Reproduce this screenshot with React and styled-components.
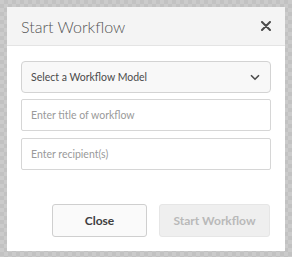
import React from "react";
import styled, { createGlobalStyle } from "styled-components";

const GlobalStyle = createGlobalStyle`
  html, body {
    margin: 0;
    padding: 0;
  }
  body {
    font-family: Lato, "Open Sans", sans-serif;
    background-color: #cbcbcb;
    background-image:
      linear-gradient(45deg, #c2c2c2 25%, transparent 25%, transparent 75%, #c2c2c2 75%),
      linear-gradient(45deg, #c2c2c2 25%, transparent 25%, transparent 75%, #c2c2c2 75%);
    background-size: 8px 8px;
    background-position: 0 0, 4px 4px;
    min-height: 257px;
  }
`;

const Page = styled.div`
  padding: 7px;
`;

const Dialog = styled.div`
  width: 278px;
  height: 244px;
  background: #fff;
  display: flex;
  flex-direction: column;
  box-sizing: border-box;
`;

const Header = styled.div`
  height: 39px;
  box-sizing: border-box;
  background: #f4f4f4;
  border-bottom: 1px solid #e4e4e4;
  display: flex;
  align-items: center;
  justify-content: space-between;
  padding: 0 12px 0 14px;
`;

const Title = styled.h1`
  margin: 0;
  font-size: 16px;
  font-weight: 300;
  color: #555;
`;

const CloseIcon = styled.button`
  border: 0;
  background: none;
  padding: 0;
  width: 14px;
  height: 14px;
  display: flex;
  align-items: center;
  justify-content: center;
  cursor: pointer;
`;

const Body = styled.div`
  flex: 1;
  padding: 15px 14px 14px;
  display: flex;
  flex-direction: column;
`;

const Fields = styled.div`
  display: flex;
  flex-direction: column;
  gap: 6px;
`;

const Select = styled.div`
  height: 32px;
  box-sizing: border-box;
  border: 1px solid #d3d3d3;
  border-radius: 4px;
  background: #f8f8f8;
  display: flex;
  align-items: center;
  justify-content: space-between;
  padding: 0 10px 0 9px;
  font-size: 10.5px;
  color: #4b4b4b;
`;

const Input = styled.input`
  height: 32px;
  box-sizing: border-box;
  border: 1px solid #d6d6d6;
  border-radius: 2px;
  background: #fff;
  padding: 0 9px;
  font-family: inherit;
  font-size: 10.5px;
  color: #4b4b4b;
  outline: none;
  &::placeholder {
    color: #9a9a9a;
  }
  & + & {
    margin-top: 1px;
  }
`;

const Footer = styled.div`
  margin-top: auto;
  display: flex;
  justify-content: flex-end;
  gap: 12px;
  padding-right: 1px;
`;

const Button = styled.button`
  height: 33px;
  width: ${(p) => p.$w}px;
  box-sizing: border-box;
  border-radius: 3px;
  border: 1px solid ${(p) => (p.disabled ? "#e6e6e6" : "#cfcfcf")};
  background: ${(p) => (p.disabled ? "#efefef" : "#fafafa")};
  color: ${(p) => (p.disabled ? "#b9b9b9" : "#3f3f3f")};
  font-family: inherit;
  font-weight: 700;
  font-size: 12px;
  padding: 0;
`;

export default function App() {
  return (
    <>
      <GlobalStyle />
      <Page>
        <Dialog>
          <Header>
            <Title>Start Workflow</Title>
            <CloseIcon aria-label="Close">
              <svg width="10" height="10" viewBox="0 0 10 10">
                <path d="M1 1L9 9M9 1L1 9" stroke="#4b4b4b" strokeWidth="2" strokeLinecap="round" />
              </svg>
            </CloseIcon>
          </Header>
          <Body>
            <Fields>
              <Select>
                <span>Select a Workflow Model</span>
                <svg width="10" height="7" viewBox="0 0 10 7">
                  <path d="M1 1.2L5 5.2L9 1.2" fill="none" stroke="#4b4b4b" strokeWidth="1.6" />
                </svg>
              </Select>
              <Input placeholder="Enter title of workflow" />
              <Input placeholder="Enter recipient(s)" />
            </Fields>
            <Footer>
              <Button $w={95}>Close</Button>
              <Button $w={111} disabled>
                Start Workflow
              </Button>
            </Footer>
          </Body>
        </Dialog>
      </Page>
    </>
  );
}
